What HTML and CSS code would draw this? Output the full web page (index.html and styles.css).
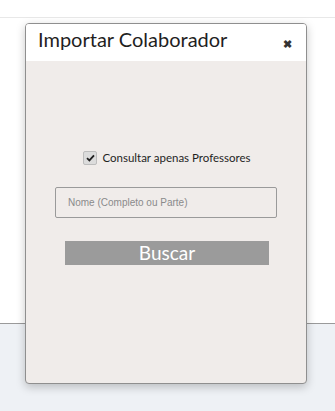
FILE: index.html
```html
<!DOCTYPE html>
<html lang="pt-BR">
<head>
    <meta charset="UTF-8">
    <meta name="viewport" content="width=device-width, initial-scale=1.0">
    <title>Importar Colaborador</title>
    <link rel="stylesheet" href="styles.css">
</head>
<body>
    <div class="page">
        <div class="topbar"></div>
        <div class="content"></div>
        <div class="footer"></div>
    </div>

    <div class="modal">
        <div class="modal-header">
            <h2>Importar Colaborador</h2>
            <button class="close" aria-label="Fechar">&#10006;</button>
        </div>
        <div class="modal-body">
            <label class="check">
                <span class="box">
                    <svg width="9" height="8" viewBox="0 0 9 8"><path d="M1 4.2 L3.4 6.4 L8 1.4" fill="none" stroke="#222" stroke-width="1.8"/></svg>
                </span>
                Consultar apenas Professores
            </label>
            <input type="text" class="nome" placeholder="Nome (Completo ou Parte)">
            <button class="buscar">Buscar</button>
        </div>
    </div>
</body>
</html>
```

FILE: styles.css
```css
body {
    margin: 0;
    font-family: Lato, 'Open Sans', sans-serif;
    background: #ffffff;
}

.page {
    display: flex;
    flex-direction: column;
    height: 411px;
}

.topbar {
    height: 17px;
    border-bottom: 1px solid #e8e8e8;
}

.content {
    height: 305px;
}

.footer {
    flex: 1;
    background: #eef1f5;
    border-top: 1px solid #9a9a9a;
}

.modal {
    position: absolute;
    left: 25px;
    top: 23px;
    width: 280px;
    height: 359px;
    border: 1px solid #8f8f8f;
    border-radius: 4px;
    background: #f0ecea;
    box-shadow: 0 3px 10px rgba(0, 0, 0, 0.22);
    display: flex;
    flex-direction: column;
    overflow: hidden;
}

.modal-header {
    height: 37px;
    background: #ffffff;
    display: flex;
    align-items: flex-start;
    justify-content: space-between;
    padding: 0 14px 0 12px;
}

.modal-header h2 {
    margin: 3px 0 0;
    font-size: 20px;
    line-height: 24px;
    font-weight: 400;
    color: #1f1f1f;
}

.close {
    margin-top: 14px;
    border: none;
    background: none;
    padding: 0;
    font-size: 11px;
    color: #333;
    font-weight: bold;
}

.modal-body {
    flex: 1;
    display: flex;
    flex-direction: column;
    align-items: center;
    padding-top: 89px;
}

.check {
    display: flex;
    align-items: center;
    gap: 5px;
    font-size: 11.5px;
    line-height: 15px;
    color: #1f1f1f;
    margin-left: 2px;
}

.box {
    width: 12px;
    height: 12px;
    border-radius: 2px;
    background: #dcdcdc;
    border: 1px solid #bdbdbd;
    display: flex;
    align-items: center;
    justify-content: center;
}

.nome {
    margin-top: 22px;
    width: 222px;
    height: 31px;
    box-sizing: border-box;
    border: 1px solid #9a9a9a;
    border-radius: 2px;
    background: #f0ecea;
    padding: 0 12px;
    font-family: 'Liberation Sans', Arial, sans-serif;
    font-size: 10px;
}

.nome::placeholder {
    color: #8a8a8a;
}

.buscar {
    margin-top: 23px;
    margin-left: 2px;
    width: 204px;
    height: 24px;
    border: none;
    background: #9b9b9b;
    color: #ffffff;
    font-family: Lato, 'Open Sans', sans-serif;
    font-size: 19px;
    line-height: 24px;
    padding: 0;
}
```
